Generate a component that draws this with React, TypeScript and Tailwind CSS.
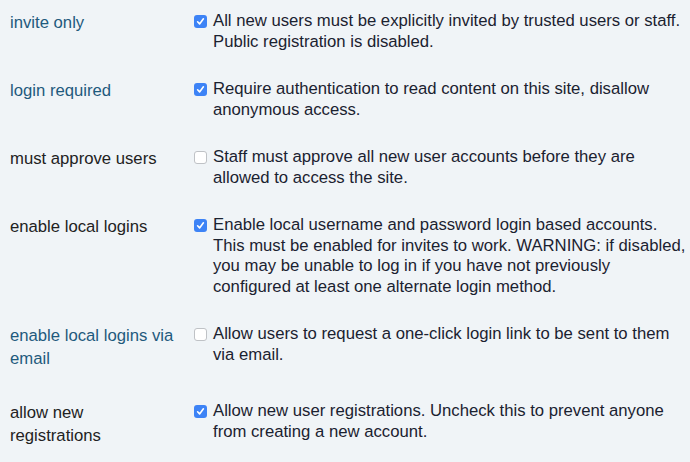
import React from 'react';

type Setting = {
  label: string[];
  lines: string[];
  checked: boolean;
  changed: boolean;
};

const settings: Setting[] = [
  {
    label: ['invite only'],
    lines: ['All new users must be explicitly invited by trusted users or staff.', 'Public registration is disabled.'],
    checked: true,
    changed: true,
  },
  {
    label: ['login required'],
    lines: ['Require authentication to read content on this site, disallow', 'anonymous access.'],
    checked: true,
    changed: true,
  },
  {
    label: ['must approve users'],
    lines: ['Staff must approve all new user accounts before they are', 'allowed to access the site.'],
    checked: false,
    changed: false,
  },
  {
    label: ['enable local logins'],
    lines: [
      'Enable local username and password login based accounts.',
      'This must be enabled for invites to work. WARNING: if disabled,',
      'you may be unable to log in if you have not previously',
      'configured at least one alternate login method.',
    ],
    checked: true,
    changed: false,
  },
  {
    label: ['enable local logins via', 'email'],
    lines: ['Allow users to request a one-click login link to be sent to them', 'via email.'],
    checked: false,
    changed: true,
  },
  {
    label: ['allow new', 'registrations'],
    lines: ['Allow new user registrations. Uncheck this to prevent anyone', 'from creating a new account.'],
    checked: true,
    changed: false,
  },
];

function Checkbox({ checked }: { checked: boolean }) {
  if (checked) {
    return (
      <span className="mt-[4px] flex h-[13px] w-[13px] shrink-0 items-center justify-center rounded-[3px] bg-[#3d83f6]">
        <svg width="9" height="9" viewBox="0 0 9 9" fill="none">
          <path d="M1.6 4.8 L3.6 6.9 L7.4 1.8" stroke="white" strokeWidth="1.6" strokeLinecap="round" strokeLinejoin="round" />
        </svg>
      </span>
    );
  }
  return <span className="mt-[4px] block h-[13px] w-[13px] shrink-0 rounded-[3px] border border-[#bfc2c6] bg-white" />;
}

export default function App() {
  return (
    <div className="min-h-[462px] w-[690px] bg-[#f0f4f7] pl-[10px] pt-[11px] font-['Liberation_Sans',Arial,sans-serif] text-[16.7px]">
      {settings.map((s, i) => (
        <div key={i} className="mb-[27px] flex">
          <div className={`w-[184px] shrink-0 pb-1 leading-[23px] ${s.changed ? 'text-[#1f5a7d]' : 'text-[#222]'}`}>
            {s.label.map((l, j) => (
              <div key={j}>{l}</div>
            ))}
          </div>
          <Checkbox checked={s.checked} />
          <div className="ml-[6px] leading-[20.5px] text-[#1b2230]">
            {s.lines.map((l, j) => (
              <div key={j} className="whitespace-nowrap">{l}</div>
            ))}
          </div>
        </div>
      ))}
    </div>
  );
}
